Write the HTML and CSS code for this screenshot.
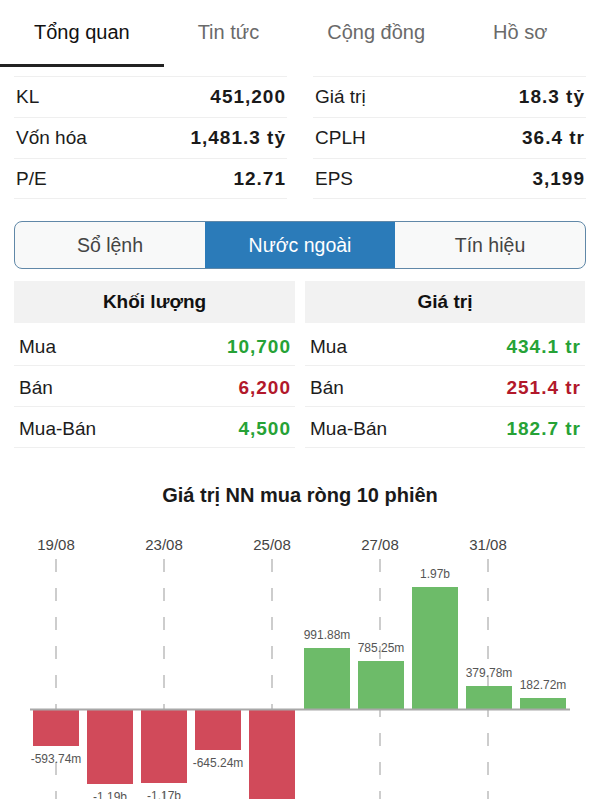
FILE: index.html
```html
<!DOCTYPE html>
<html lang="vi">
<head>
    <meta charset="UTF-8">
    <meta name="viewport" content="width=device-width, initial-scale=1.0">
    <title>Nước ngoài</title>
    <link rel="stylesheet" href="styles.css">
</head>
<body>
    <nav class="tabs">
        <div class="tab active">Tổng quan</div>
        <div class="tab">Tin tức</div>
        <div class="tab">Cộng đồng</div>
        <div class="tab">Hồ sơ</div>
    </nav>

    <section class="stats">
        <div class="stats-col">
            <div class="stat-row"><span>KL</span><b>451,200</b></div>
            <div class="stat-row"><span>Vốn hóa</span><b>1,481.3 tỷ</b></div>
            <div class="stat-row"><span>P/E</span><b>12.71</b></div>
        </div>
        <div class="stats-col">
            <div class="stat-row"><span>Giá trị</span><b>18.3 tỷ</b></div>
            <div class="stat-row"><span>CPLH</span><b>36.4 tr</b></div>
            <div class="stat-row"><span>EPS</span><b>3,199</b></div>
        </div>
    </section>

    <div class="segment">
        <div class="seg-item">Sổ lệnh</div>
        <div class="seg-item active">Nước ngoài</div>
        <div class="seg-item">Tín hiệu</div>
    </div>

    <section class="foreign">
        <div class="foreign-col">
            <div class="foreign-head">Khối lượng</div>
            <div class="foreign-row"><span>Mua</span><b class="up">10,700</b></div>
            <div class="foreign-row"><span>Bán</span><b class="down">6,200</b></div>
            <div class="foreign-row"><span>Mua-Bán</span><b class="up">4,500</b></div>
        </div>
        <div class="foreign-col">
            <div class="foreign-head">Giá trị</div>
            <div class="foreign-row"><span>Mua</span><b class="up">434.1 tr</b></div>
            <div class="foreign-row"><span>Bán</span><b class="down">251.4 tr</b></div>
            <div class="foreign-row"><span>Mua-Bán</span><b class="up">182.7 tr</b></div>
        </div>
    </section>

    <h3 class="chart-title">Giá trị NN mua ròng 10 phiên</h3>

    <svg class="chart" width="600" height="280" viewBox="0 520 600 280">
        <g class="dates">
            <text x="56" y="551">19/08</text>
            <text x="164" y="551">23/08</text>
            <text x="272" y="551">25/08</text>
            <text x="380" y="551">27/08</text>
            <text x="488" y="551">31/08</text>
        </g>
        <g class="grid">
            <line x1="56" y1="560" x2="56" y2="800" />
            <line x1="164" y1="560" x2="164" y2="800" />
            <line x1="272" y1="560" x2="272" y2="800" />
            <line x1="380" y1="560" x2="380" y2="800" />
            <line x1="488" y1="560" x2="488" y2="800" />
        </g>
        <g class="bars-neg">
            <rect x="33" y="711" width="46" height="36" />
            <rect x="87" y="711" width="46" height="74" />
            <rect x="141" y="711" width="46" height="73" />
            <rect x="195" y="711" width="46" height="40" />
            <rect x="249" y="711" width="46" height="110" />
        </g>
        <g class="bars-pos">
            <rect x="304" y="649" width="46" height="62" />
            <rect x="358" y="662" width="46" height="49" />
            <rect x="412" y="588" width="46" height="123" />
            <rect x="466" y="687" width="46" height="24" />
            <rect x="520" y="699" width="46" height="12" />
        </g>
        <line class="axis" x1="30" y1="710.5" x2="570" y2="710.5" />
        <g class="values">
            <text x="56" y="764">-593.74m</text>
            <text x="110" y="802">-1.19b</text>
            <text x="164" y="801">-1.17b</text>
            <text x="218" y="768">-645.24m</text>
            <text x="327" y="640">991.88m</text>
            <text x="381" y="653">785.25m</text>
            <text x="435" y="579">1.97b</text>
            <text x="489" y="678">379.78m</text>
            <text x="543" y="690">182.72m</text>
        </g>
    </svg>
</body>
</html>
```

FILE: styles.css
```css
* {
    margin: 0;
    padding: 0;
    box-sizing: border-box;
}

body {
    font-family: "Liberation Sans", Arial, sans-serif;
    background: #fff;
    color: #1c1c1c;
    overflow: hidden;
}

.tabs {
    display: flex;
    height: 67px;
}

.tab {
    padding: 0 34px;
    font-size: 20px;
    color: #6a6a6a;
    line-height: 64px;
    border-bottom: 3px solid transparent;
}

.tab.active {
    color: #111;
    border-bottom-color: #222;
}

.stats {
    display: grid;
    grid-template-columns: 1fr 1fr;
    column-gap: 26px;
    padding: 0 14px;
    margin-top: 9px;
}

.stat-row {
    display: flex;
    justify-content: space-between;
    align-items: center;
    height: 41px;
    border-top: 1px solid #efefef;
    font-size: 19px;
    padding: 0 2px;
}

.stat-row:last-child {
    border-bottom: 1px solid #efefef;
}

.stat-row b {
    color: #1a1a1a;
    letter-spacing: 1px;
    margin-right: -1px;
}

.segment {
    display: flex;
    margin: 22px 14px 0;
    height: 48px;
    border: 1.5px solid #6088a8;
    border-radius: 8px;
    overflow: hidden;
    background: #f8f9f9;
}

.seg-item {
    flex: 1;
    display: flex;
    align-items: center;
    justify-content: center;
    font-size: 19.5px;
    color: #444;
}

.seg-item.active {
    background: #2b7bb9;
    color: #fff;
}

.foreign {
    display: grid;
    grid-template-columns: 281px 280px;
    column-gap: 10px;
    padding: 0 14px;
    margin-top: 12px;
}

.foreign-head {
    height: 42px;
    background: #f2f2f2;
    font-size: 19px;
    font-weight: bold;
    color: #111;
    display: flex;
    align-items: center;
    justify-content: center;
}

.foreign-row {
    display: flex;
    justify-content: space-between;
    align-items: center;
    height: 41px;
    border-bottom: 1px solid #efefef;
    font-size: 19px;
    padding: 4px 5px 0;
}

.foreign-row:nth-child(2) {
    height: 43px;
    padding-top: 6px;
}

.foreign-row b {
    letter-spacing: 1px;
    margin-right: -1px;
}

.up {
    color: #26a236;
}

.down {
    color: #b2182b;
}

.chart-title {
    text-align: center;
    font-size: 20px;
    font-weight: bold;
    color: #1a1a1a;
    margin-top: 36px;
    height: 26px;
    line-height: 22px;
}

.chart {
    display: block;
    margin-top: 9px;
}

.dates text {
    font-size: 15px;
    fill: #444;
    text-anchor: middle;
}

.grid line {
    stroke: #bdbdbd;
    stroke-width: 1.5;
    stroke-dasharray: 13 16;
}

.bars-neg rect {
    fill: #d14a5a;
}

.bars-pos rect {
    fill: #6dbb69;
}

.axis {
    stroke: #a8a8a8;
    stroke-width: 2;
}

.values text {
    font-size: 12px;
    fill: #555;
    text-anchor: middle;
}
```
